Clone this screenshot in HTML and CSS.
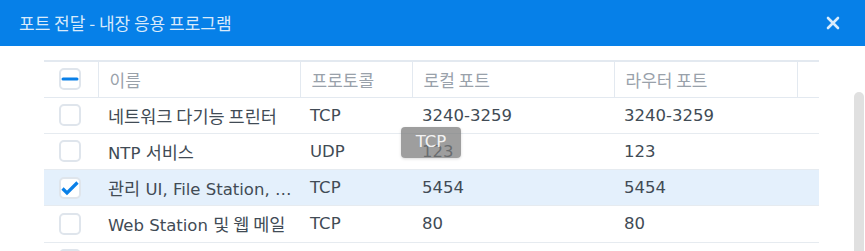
FILE: index.html
```html
<!DOCTYPE html>
<html>
<head>
    <title>포트 전달 - 내장 응용 프로그램</title>
    <meta name="viewport" content="width=device-width, initial-scale=1">
    <link rel="stylesheet" href="styles.css">
</head>
<body>
    <div class="dialog">
        <div class="dialog-header">
            <span class="dialog-title">포트 전달 - 내장 응용 프로그램</span>
            <button class="btn-close" title="닫기">
                <svg width="14" height="14" viewBox="0 0 14 14">
                    <path d="M2 2 L12 12 M12 2 L2 12" stroke="currentColor" stroke-width="2.6" stroke-linecap="round"/>
                </svg>
            </button>
        </div>

        <div class="dialog-body">
            <div class="grid-wrap">
                <table class="grid">
                    <colgroup>
                        <col class="col-check">
                        <col class="col-name">
                        <col class="col-proto">
                        <col class="col-local">
                        <col class="col-router">
                        <col>
                    </colgroup>
                    <thead>
                        <tr>
                            <th>
                                <span class="checkbox">
                                    <svg width="18" height="18" viewBox="0 0 18 18"><path d="M2 9 H16" stroke="#0a80e8" stroke-width="3" stroke-linecap="round"/></svg>
                                </span>
                            </th>
                            <th>이름</th>
                            <th>프로토콜</th>
                            <th>로컬 포트</th>
                            <th>라우터 포트</th>
                            <th></th>
                        </tr>
                    </thead>
                    <tbody>
                        <tr>
                            <td><span class="checkbox"></span></td>
                            <td><span class="ko">네트워크 다기능 프린터</span></td>
                            <td>TCP</td>
                            <td>3240-3259</td>
                            <td>3240-3259</td>
                            <td></td>
                        </tr>
                        <tr>
                            <td><span class="checkbox"></span></td>
                            <td>NTP <span class="ko">서비스</span></td>
                            <td>UDP</td>
                            <td>123</td>
                            <td>123</td>
                            <td></td>
                        </tr>
                        <tr class="selected">
                            <td>
                                <span class="checkbox">
                                    <svg width="18" height="18" viewBox="0 0 18 18"><path d="M1.5 9.5 L6 14 L16.5 3.5" fill="none" stroke="#0a80e8" stroke-width="3.2"/></svg>
                                </span>
                            </td>
                            <td class="ellipsis"><span class="ko">관리</span> UI, File Station, Audio Station</td>
                            <td>TCP</td>
                            <td>5454</td>
                            <td>5454</td>
                            <td></td>
                        </tr>
                        <tr>
                            <td><span class="checkbox"></span></td>
                            <td>Web Station <span class="ko">및 웹 메일</span></td>
                            <td>TCP</td>
                            <td>80</td>
                            <td>80</td>
                            <td></td>
                        </tr>
                        <tr>
                            <td><span class="checkbox"></span></td>
                            <td></td>
                            <td></td>
                            <td></td>
                            <td></td>
                            <td></td>
                        </tr>
                    </tbody>
                </table>
                <div class="tooltip">TCP</div>
            </div>
            <div class="scrollbar"></div>
        </div>
    </div>
</body>
</html>
```

FILE: styles.css
```css
* {
    margin: 0;
    padding: 0;
    box-sizing: border-box;
}

body {
    font-family: 'DejaVu Sans', 'Noto Sans CJK KR', sans-serif;
    background: white;
    width: 865px;
    height: 251px;
    overflow: hidden;
}

.dialog-header {
    height: 46px;
    background: #0680e8;
    display: flex;
    align-items: center;
    justify-content: space-between;
    padding: 0 25px 0 19px;
}

.dialog-title {
    font-family: 'Noto Sans CJK KR', sans-serif;
    font-size: 17px;
    color: rgba(255,255,255,0.85);
    margin-top: -1px;
}

.btn-close {
    background: none;
    border: none;
    color: rgba(255,255,255,0.85);
    display: flex;
    cursor: pointer;
    margin-top: -1px;
}

.dialog-body {
    display: flex;
    padding-top: 14px;
}

.grid-wrap {
    position: relative;
    margin-left: 44px;
    width: 775px;
}

.grid {
    width: 775px;
    border-collapse: collapse;
    table-layout: fixed;
    font-size: 16.5px;
    color: #414b55;
}

.col-check { width: 54px; }
.col-name { width: 202px; }
.col-proto { width: 112px; }
.col-local { width: 202px; }
.col-router { width: 183px; }

.ko {
    font-family: 'Noto Sans CJK KR', sans-serif;
    font-size: 17.5px;
}

.grid th {
    height: 36px;
    font-weight: normal;
    text-align: left;
    color: #99a1aa;
    font-family: 'Noto Sans CJK KR', sans-serif;
    font-size: 17px;
    padding: 0 0 0 11px;
    border-top: 2px solid #e3e9f0;
    border-bottom: 1px solid #e3e9f0;
    border-left: 1px solid #e3e9f0;
}

.grid th:first-child {
    border-left: none;
    padding-left: 15px;
}

.grid td {
    height: 36.25px;
    padding: 0 10px 0 10px;
    border-bottom: 1px solid #e6ebf0;
    white-space: nowrap;
}

.grid td:first-child {
    padding-left: 15px;
}

.grid tr.selected td {
    background: #e4f0fc;
}

.grid td.ellipsis {
    overflow: hidden;
    text-overflow: ellipsis;
    padding-right: 8px;
}

.checkbox {
    display: block;
    width: 22px;
    height: 22px;
    border: 2px solid #dfe5ec;
    border-radius: 5px;
    background: white;
}

.checkbox svg {
    display: block;
}

.tooltip {
    position: absolute;
    left: 357px;
    top: 67px;
    width: 60px;
    height: 31px;
    padding-top: 5px;
    text-align: center;
    font-size: 16.5px;
    color: rgba(255,255,255,0.9);
    background: rgba(120,120,120,0.72);
    border-radius: 4px;
    box-shadow: 0 1px 3px rgba(0,0,0,0.15);
}

.scrollbar {
    width: 10px;
    height: 180px;
    margin: 32px 0 0 35px;
    background: #e0e0e0;
    border-radius: 5px 5px 0 0;
}
```
